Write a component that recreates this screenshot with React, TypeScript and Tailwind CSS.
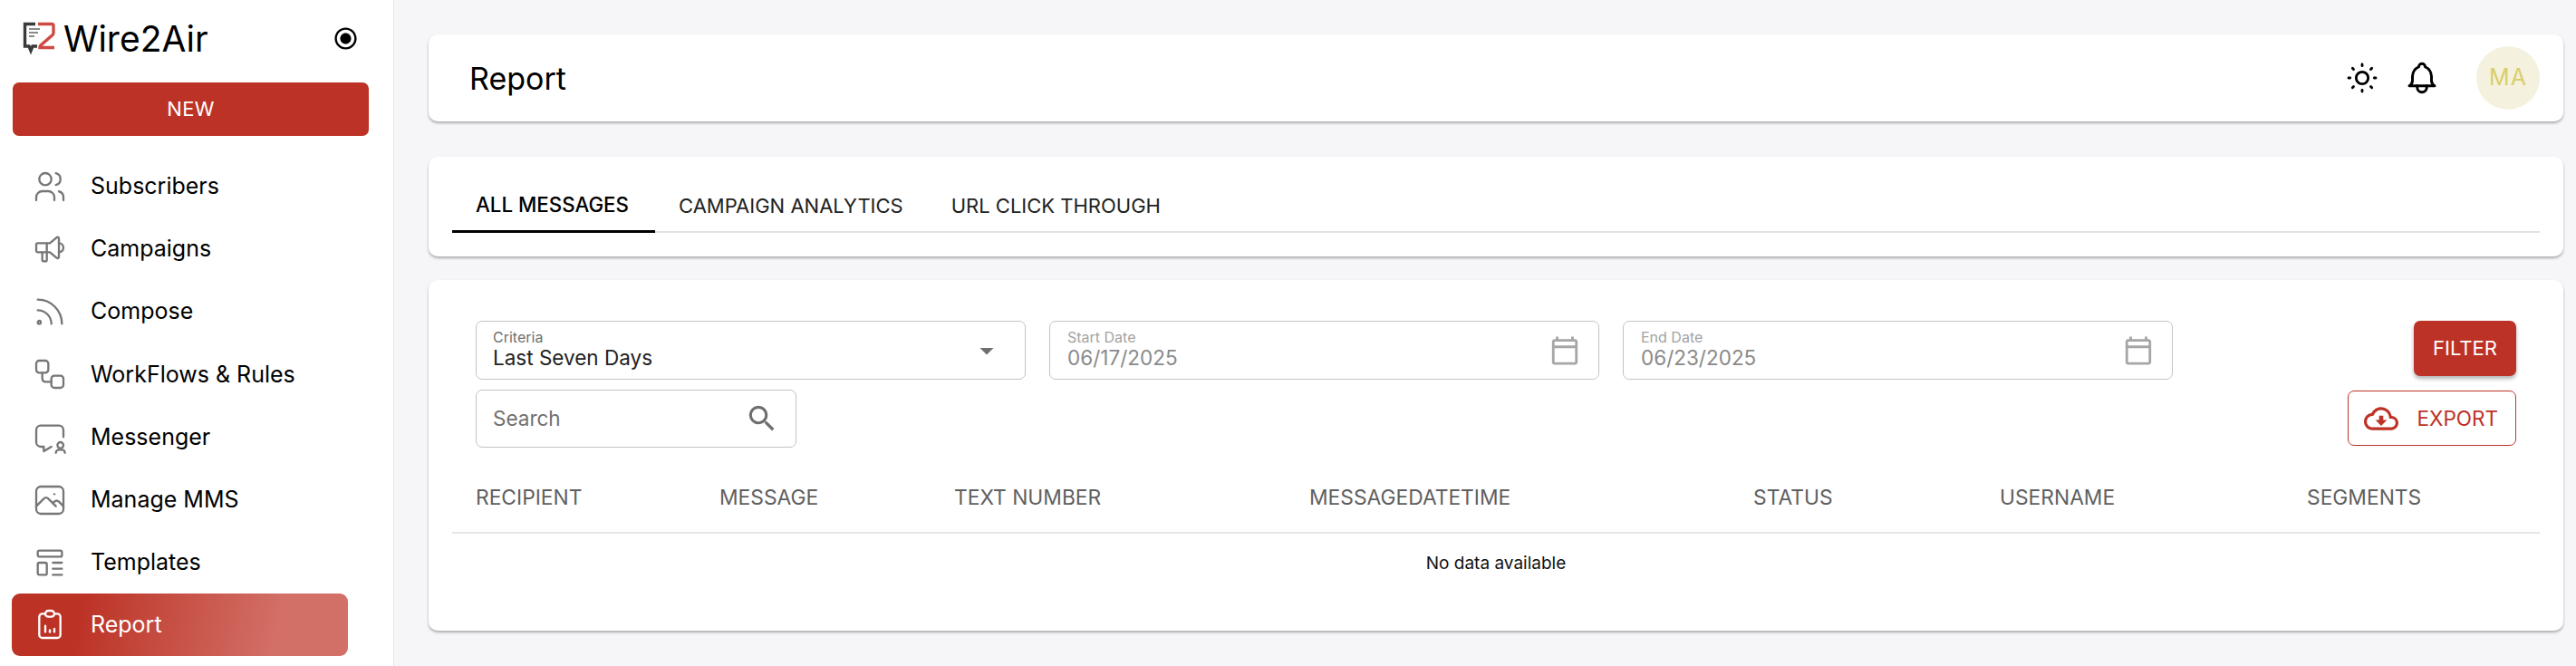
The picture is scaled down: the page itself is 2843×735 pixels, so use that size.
import React from 'react'
import { Workflow } from 'lucide-react'
import {
  TbUsers,
  TbSpeakerphone,
  TbRss,
  TbMessageUser,
  TbPhoto,
  TbTemplate,
  TbClipboardData,
  TbSun,
  TbBell,
} from 'react-icons/tb'
import { MdRadioButtonChecked, MdArrowDropDown, MdOutlineCalendarToday, MdSearch, MdOutlineCloudDownload } from 'react-icons/md'

const navItems = [
  { label: 'Subscribers', icon: <TbUsers className="w-[40px] h-[40px]" style={{ strokeWidth: 1.4 }} /> },
  { label: 'Campaigns', icon: <TbSpeakerphone className="w-[40px] h-[40px]" style={{ strokeWidth: 1.4 }} /> },
  { label: 'Compose', icon: <TbRss className="w-[40px] h-[40px]" style={{ strokeWidth: 1.4 }} /> },
  { label: 'WorkFlows & Rules', icon: <Workflow className="w-[40px] h-[40px]" strokeWidth={1.4} /> },
  { label: 'Messenger', icon: <TbMessageUser className="w-[40px] h-[40px]" style={{ strokeWidth: 1.4 }} /> },
  { label: 'Manage MMS', icon: <TbPhoto className="w-[40px] h-[40px]" style={{ strokeWidth: 1.4 }} /> },
  { label: 'Templates', icon: <TbTemplate className="w-[40px] h-[40px]" style={{ strokeWidth: 1.4 }} /> },
]

const columns = ['RECIPIENT', 'MESSAGE', 'TEXT NUMBER', 'MESSAGEDATETIME', 'STATUS', 'USERNAME', 'SEGMENTS']

function Logo() {
  return (
    <svg viewBox="0 0 40 40" className="w-[40px] h-[40px] shrink-0" fill="none">
      <path d="M15 3.5H3.5V28H8l2 5 2-5h5" stroke="#3a3a3a" strokeWidth="3.4" />
      <path d="M8 9h12M8 13h10M8 17h6" stroke="#8a8a8a" strokeWidth="1.8" />
      <path d="M18 3.5h15q2 0 2 2v8q0 2-2 3L21 27q-1 1-1 2v.5h16" stroke="#cf4a45" strokeWidth="3.4" />
    </svg>
  )
}

function DateField({ label, value }: { label: string; value: string }) {
  return (
    <div className="w-[607px] h-[65px] border border-[#c4c4c4] rounded-[7px] pl-[19px] pr-[20px] flex items-center justify-between">
      <div className="flex flex-col -mt-[4px]">
        <span className="text-[16px] leading-[20px] text-[#a3a3a3]">{label}</span>
        <span className="text-[22.5px] leading-[25px] text-[#8a8a8a]">{value}</span>
      </div>
      <MdOutlineCalendarToday className="w-[34px] h-[34px] text-[#a6a6a6]" />
    </div>
  )
}

export default function App() {
  return (
    <div className="flex h-screen overflow-hidden bg-[#f6f6f9] text-black font-['Inter',sans-serif]">
      {/* Sidebar */}
      <aside className="w-[435px] shrink-0 bg-white border-r border-[#e6e6ea] flex flex-col">
        <div className="h-[91px] pl-[24px] pr-[38px] pb-[6px] flex items-center justify-between">
          <div className="flex items-center gap-[6px]">
            <Logo />
            <span className="text-[39px] leading-none font-normal">Wire2Air</span>
          </div>
          <MdRadioButtonChecked className="w-[29px] h-[29px]" />
        </div>
        <div className="pl-[14px] pr-[27px]">
          <button type="button" className="w-full h-[59px] bg-[#bc3226] rounded-[7px] text-white text-[22px] tracking-[0.3px]">
            NEW
          </button>
        </div>
        <nav className="mt-[21px] pl-[13px] pr-[50px]">
          {navItems.map((item) => (
            <div key={item.label} className="h-[69.25px] flex items-center">
              <span className="w-[87px] pl-[22px] text-[#767676] flex items-center">{item.icon}</span>
              <span className="text-[25px]">{item.label}</span>
            </div>
          ))}
          <div className="-mt-[1px] h-[69px] flex items-center rounded-[9px] text-white bg-[linear-gradient(100deg,#bc3225_20%,#d26f66_78%)]">
            <span className="w-[87px] pl-[22px] flex items-center">
              <TbClipboardData className="w-[40px] h-[40px]" style={{ strokeWidth: 1.4 }} />
            </span>
            <span className="text-[25px]">Report</span>
          </div>
        </nav>
      </aside>

      {/* Main */}
      <main className="flex-1 pl-[38px] pr-[14px] pt-[38px] flex flex-col">
        <header className="h-[96px] bg-white rounded-[10px] shadow-[0_2px_3px_rgba(0,0,0,0.3)] pl-[45px] pr-[26px] flex items-center justify-between">
          <h1 className="text-[34px] font-normal">Report</h1>
          <div className="flex items-center">
            <TbSun className="w-[40px] h-[40px]" style={{ strokeWidth: 1.7 }} />
            <TbBell className="w-[42px] h-[42px] ml-[25px]" style={{ strokeWidth: 1.7 }} />
            <div className="w-[70px] h-[70px] ml-[39px] rounded-full bg-[#f4f2df] text-[#d8ce6c] text-[25px] tracking-[1px] flex items-center justify-center">
              MA
            </div>
          </div>
        </header>

        <section className="mt-[39px] h-[110px] bg-white rounded-[10px] shadow-[0_2px_3px_rgba(0,0,0,0.3)] px-[26px] pt-[29px]">
          <div className="flex h-[55px] border-b-2 border-[#e2e2e2] text-[22px]">
            <div className="w-[224px] h-[55px] pb-[4px] pl-[26px] border-b-[3px] border-black flex items-center font-medium text-[22.3px]">ALL MESSAGES</div>
            <div className="ml-[26px] h-[50px] flex items-center text-[#222]">CAMPAIGN ANALYTICS</div>
            <div className="ml-[53px] h-[50px] flex items-center text-[#222]">URL CLICK THROUGH</div>
          </div>
        </section>

        <section className="mt-[26px] h-[387px] bg-white rounded-[10px] shadow-[0_2px_3px_rgba(0,0,0,0.3)] px-[26px] pt-[45px]">
          <div className="flex justify-between pl-[26px] pr-[26px]">
            <div>
              <div className="flex gap-[26px]">
                <div className="w-[607px] h-[65px] border border-[#c4c4c4] rounded-[7px] pl-[18px] pr-[24px] flex items-center justify-between">
                  <div className="flex flex-col -mt-[4px]">
                    <span className="text-[16px] leading-[20px] text-[#6f6f6f]">Criteria</span>
                    <span className="text-[22.5px] leading-[25px] text-[#222]">Last Seven Days</span>
                  </div>
                  <MdArrowDropDown className="w-[36px] h-[36px] text-[#6f6f6f]" />
                </div>
                <DateField label="Start Date" value="06/17/2025" />
                <DateField label="End Date" value="06/23/2025" />
              </div>
              <div className="mt-[11px] w-[354px] h-[64px] border border-[#c4c4c4] rounded-[7px] pl-[18px] pr-[18px] flex items-center justify-between">
                <span className="text-[22.5px] text-[#6f6f6f]">Search</span>
                <MdSearch className="w-[38px] h-[38px] text-[#6f6f6f]" />
              </div>
            </div>
            <div className="flex flex-col items-end">
              <button type="button" className="w-[113px] h-[61px] bg-[#bc3226] rounded-[7px] text-white text-[22px] shadow-[0_3px_4px_rgba(0,0,0,0.3)]">
                FILTER
              </button>
              <button type="button" className="mt-[16px] w-[186px] h-[61px] border border-[#bc3226] rounded-[7px] pr-[19px] text-[#bc3226] text-[22.5px] flex items-center justify-end gap-[21px]">
                <MdOutlineCloudDownload className="w-[38px] h-[38px]" />
                EXPORT
              </button>
            </div>
          </div>

          <div className="mt-[24px] h-[71px] pb-[6px] border-b-2 border-[#e6e6e6] pl-[26px] grid grid-cols-[269px_259px_392px_490px_272px_339px_1fr] items-center text-[22.8px] text-[#5f5f5f]">
            {columns.map((col) => (
              <span key={col}>{col}</span>
            ))}
          </div>
          <div className="h-[66px] flex items-center justify-center text-[19px] text-[#111]">No data available</div>
        </section>
      </main>
    </div>
  )
}
